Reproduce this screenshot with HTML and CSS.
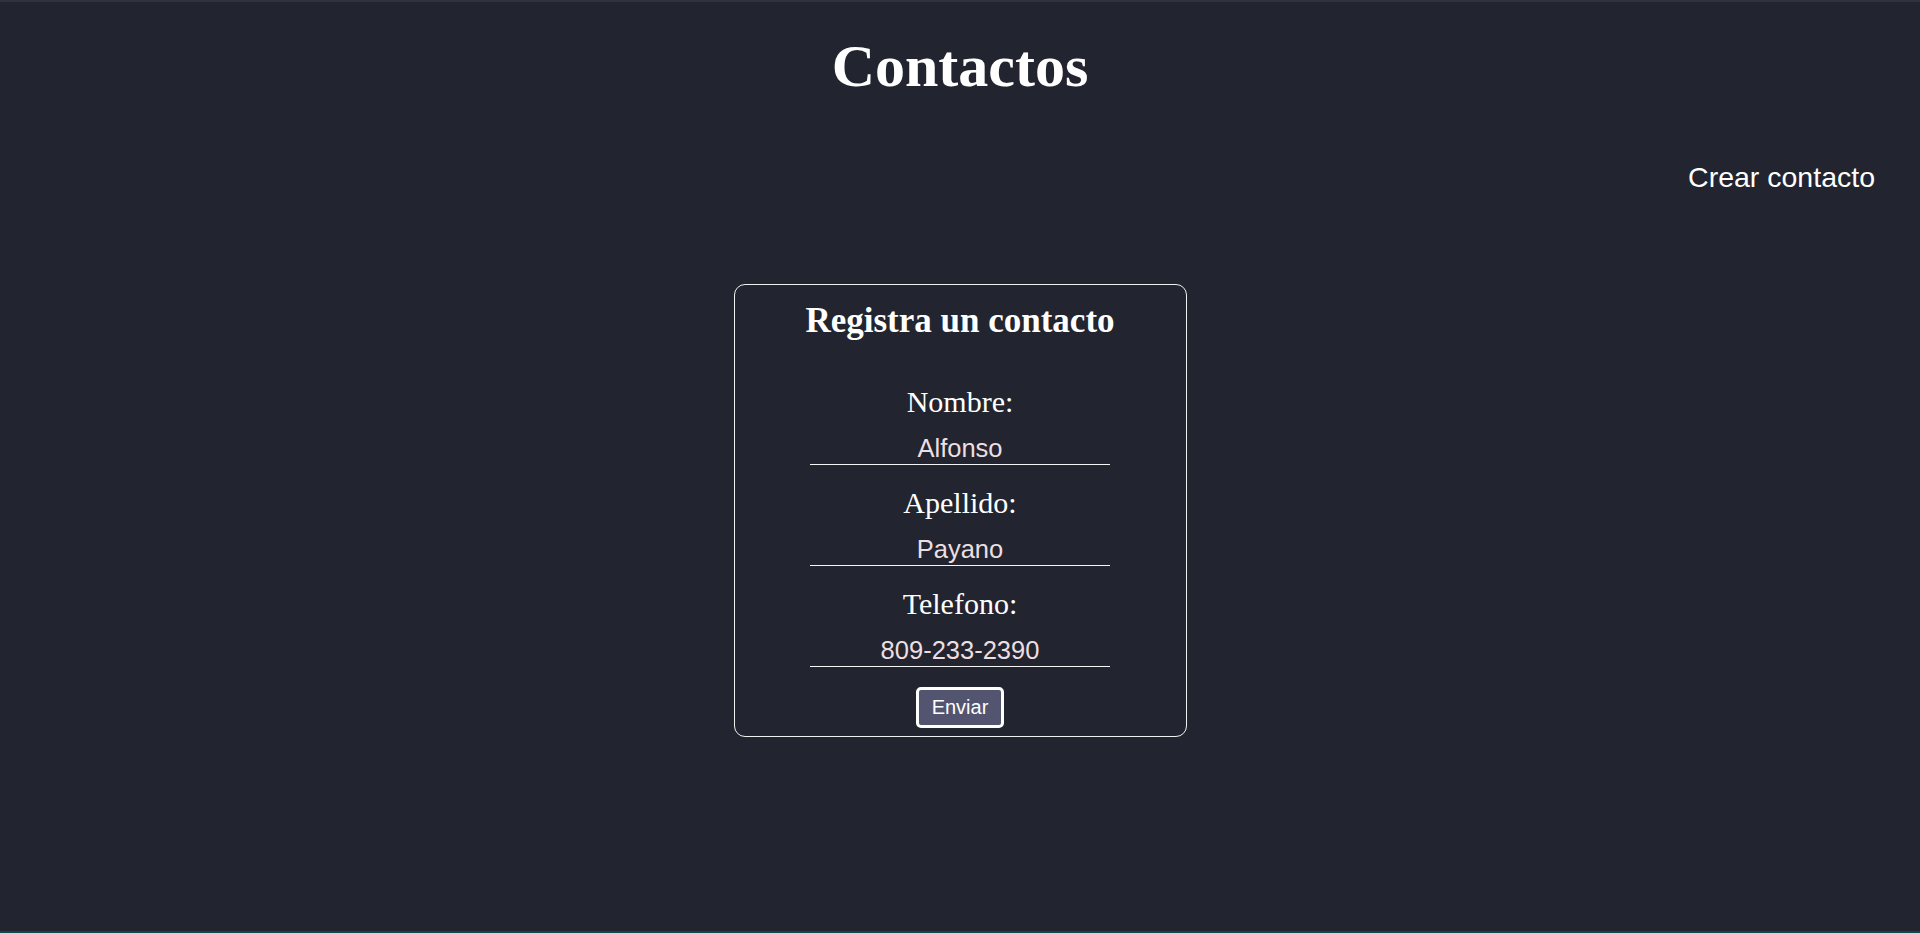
FILE: index.html
```html
<!DOCTYPE html>
<html lang="es">
<head>
<meta charset="utf-8">
<title>Contactos</title>
<link rel="stylesheet" href="styles.css">
</head>
<body>
<div class="page">
  <h1 class="title">Contactos</h1>
  <nav class="nav">
    <a class="nav-link" href="#">Crear contacto</a>
  </nav>
  <main class="main">
    <form class="card">
      <h2 class="card-title">Registra un contacto</h2>
      <div class="field">
        <label class="field-label" for="nombre">Nombre:</label>
        <input class="field-input" id="nombre" type="text" value="Alfonso">
      </div>
      <div class="field">
        <label class="field-label" for="apellido">Apellido:</label>
        <input class="field-input" id="apellido" type="text" value="Payano">
      </div>
      <div class="field">
        <label class="field-label" for="telefono">Telefono:</label>
        <input class="field-input" id="telefono" type="text" value="809-233-2390">
      </div>
      <button class="btn" type="button">Enviar</button>
    </form>
  </main>
</div>
</body>
</html>
```

FILE: styles.css
```css
* { box-sizing: border-box; }

html, body {
  margin: 0;
  padding: 0;
  height: 100%;
}

body {
  background: #22252f;
  color: #ffffff;
  font-family: "Liberation Serif", "Times New Roman", serif;
}

.page {
  min-height: 100%;
  border-top: 2px solid #30323f;
  border-bottom: 2px solid #0b4a4c;
  display: flex;
  flex-direction: column;
  height: 933px;
}

.title {
  margin: 30px 0 0;
  font-size: 60px;
  line-height: 69px;
  font-weight: bold;
  text-align: center;
}

.nav {
  display: flex;
  justify-content: flex-end;
  padding: 0 45px 0 0;
  margin-top: 60px;
}

.nav-link {
  font-family: "Liberation Sans", Arial, sans-serif;
  font-size: 28.5px;
  line-height: 32px;
  color: #ffffff;
  text-decoration: none;
}

.main {
  display: flex;
  justify-content: center;
  margin-top: 91px;
}

.card {
  width: 453px;
  border: 1px solid #f0f0f0;
  border-radius: 11px;
  padding: 16px 0 8px;
  display: flex;
  flex-direction: column;
  align-items: center;
}

.card-title {
  margin: 0 0 44px;
  font-size: 35px;
  line-height: 40px;
  font-weight: bold;
  text-align: center;
}

.field {
  display: flex;
  flex-direction: column;
  align-items: center;
  margin-bottom: 21px;
}

.field:nth-of-type(3) {
  margin-bottom: 20px;
}

.field-label {
  font-size: 30px;
  line-height: 34px;
  margin-bottom: 14px;
}

.field-input {
  width: 300px;
  height: 32px;
  padding: 0;
  margin: 0;
  background: transparent;
  border: none;
  border-bottom: 1px solid #f5f5f5;
  color: #ecdfe1;
  font-family: "Liberation Sans", Arial, sans-serif;
  font-size: 25.5px;
  text-align: center;
  outline: none;
}

.btn {
  height: 41px;
  padding: 0 13px;
  background: #535570;
  border: 3px solid #ffffff;
  border-radius: 5px;
  color: #ffffff;
  font-family: "Liberation Sans", Arial, sans-serif;
  font-size: 20px;
  line-height: 23px;
}
```
